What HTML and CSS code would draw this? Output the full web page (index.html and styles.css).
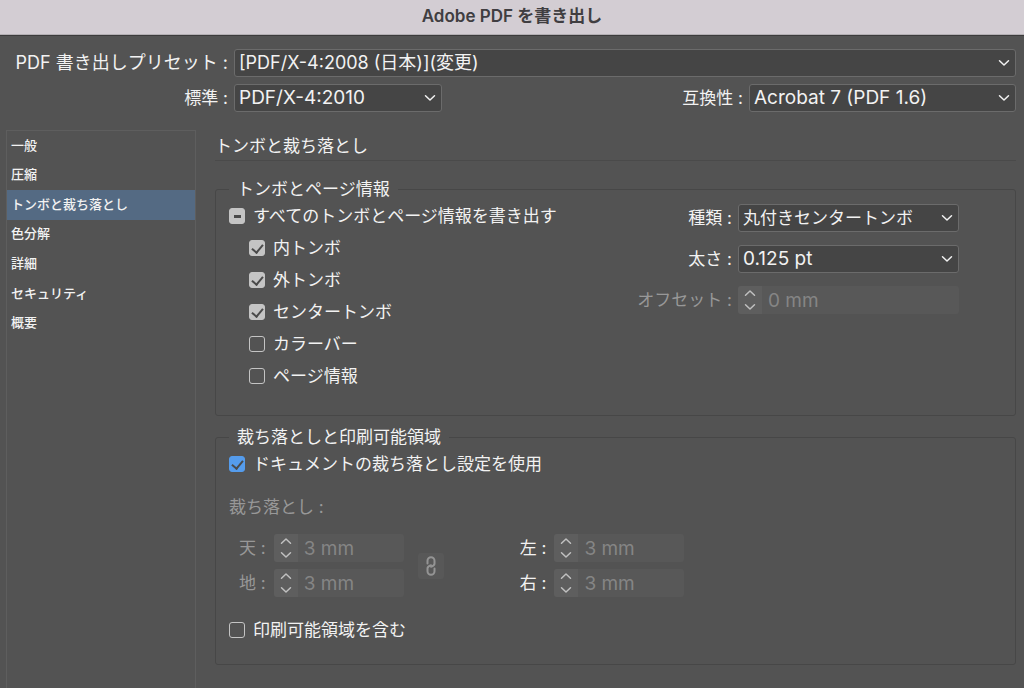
FILE: index.html
```html
<!DOCTYPE html>
<html lang="ja">
<head>
<meta charset="utf-8">
<title>Adobe PDF を書き出し</title>
<link rel="stylesheet" href="styles.css">
</head>
<body>
<svg class="sprite" aria-hidden="true">
  <symbol id="chevron" viewBox="0 0 12 8"><path d="M1.500 1.800 6 6 10.500 1.800"/></symbol>
  <symbol id="chevron-up" viewBox="0 0 12 8"><path d="M1.500 6.200 6 2 10.500 6.200"/></symbol>
</svg>
<div class="dialog">
  <header class="titlebar"><h1>Adobe PDF を書き出し</h1></header>

  <div class="presets">
    <label for="preset" class="mixed">PDF 書き出しプリセット :</label>
    <div class="select mixed"><select id="preset"><option>[PDF/X-4:2008 (日本)](変更)</option></select><svg><use href="#chevron"/></svg></div>
    <label for="standard">標準 :</label>
    <div class="preset-pair">
      <div class="select standard latin"><select id="standard"><option>PDF/X-4:2010</option></select><svg><use href="#chevron"/></svg></div>
      <div class="field">
        <label for="compat">互換性 :</label>
        <div class="select compat latin"><select id="compat"><option>Acrobat 7 (PDF 1.6)</option></select><svg><use href="#chevron"/></svg></div>
      </div>
    </div>
  </div>

  <div class="body">
    <nav class="sidebar">
      <div class="tabs">
        <button type="button">一般</button>
        <button type="button">圧縮</button>
        <button type="button" class="selected" aria-current="page">トンボと裁ち落とし</button>
        <button type="button">色分解</button>
        <button type="button">詳細</button>
        <button type="button">セキュリティ</button>
        <button type="button">概要</button>
      </div>
    </nav>

    <main class="panel">
      <h2>トンボと裁ち落とし</h2>

      <fieldset class="marks">
        <legend>トンボとページ情報</legend>
        <div class="columns">
          <div class="checks">
            <label class="check"><input type="checkbox" aria-checked="mixed"><span>すべてのトンボとページ情報を書き出す</span></label>
            <div class="checks nested">
              <label class="check"><input type="checkbox" checked><span>内トンボ</span></label>
              <label class="check"><input type="checkbox" checked><span>外トンボ</span></label>
              <label class="check"><input type="checkbox" checked><span>センタートンボ</span></label>
              <label class="check"><input type="checkbox"><span>カラーバー</span></label>
              <label class="check"><input type="checkbox"><span>ページ情報</span></label>
            </div>
          </div>
          <div class="options">
            <label for="type">種類 :</label>
            <div class="select"><select id="type"><option>丸付きセンタートンボ</option></select><svg><use href="#chevron"/></svg></div>
            <label for="weight">太さ :</label>
            <div class="select latin"><select id="weight"><option>0.125 pt</option></select><svg><use href="#chevron"/></svg></div>
            <label for="offset" class="dim">オフセット :</label>
            <div class="spin latin">
              <div class="stepper"><button type="button" disabled aria-label="増やす"><svg><use href="#chevron-up"/></svg></button><button type="button" disabled aria-label="減らす"><svg><use href="#chevron"/></svg></button></div>
              <input id="offset" type="text" value="0 mm" disabled>
            </div>
          </div>
        </div>
      </fieldset>

      <fieldset class="bleed">
        <legend>裁ち落としと印刷可能領域</legend>
        <label class="check accent"><input type="checkbox" checked><span>ドキュメントの裁ち落とし設定を使用</span></label>
        <p class="dim">裁ち落とし :</p>
        <div class="margins">
          <div class="pair">
            <label for="top" class="dim">天 :</label>
            <div class="spin latin">
              <div class="stepper"><button type="button" disabled aria-label="増やす"><svg><use href="#chevron-up"/></svg></button><button type="button" disabled aria-label="減らす"><svg><use href="#chevron"/></svg></button></div>
              <input id="top" type="text" value="3 mm" disabled>
            </div>
            <label for="bottom" class="dim">地 :</label>
            <div class="spin latin">
              <div class="stepper"><button type="button" disabled aria-label="増やす"><svg><use href="#chevron-up"/></svg></button><button type="button" disabled aria-label="減らす"><svg><use href="#chevron"/></svg></button></div>
              <input id="bottom" type="text" value="3 mm" disabled>
            </div>
          </div>
          <button type="button" class="link" disabled aria-label="すべての設定を同一にする">
            <svg viewBox="0 0 12 20"><path d="M2.500 7.500V4.800a3.500 3.500 0 0 1 7 0V7.500Q9.500 9.800 6 10.800"/><path d="M9.500 12.500v2.700a3.500 3.500 0 0 1-7 0V12.500Q2.500 10.200 6 9.200"/></svg>
          </button>
          <div class="pair">
            <label for="left">左 :</label>
            <div class="spin latin">
              <div class="stepper"><button type="button" disabled aria-label="増やす"><svg><use href="#chevron-up"/></svg></button><button type="button" disabled aria-label="減らす"><svg><use href="#chevron"/></svg></button></div>
              <input id="left" type="text" value="3 mm" disabled>
            </div>
            <label for="right">右 :</label>
            <div class="spin latin">
              <div class="stepper"><button type="button" disabled aria-label="増やす"><svg><use href="#chevron-up"/></svg></button><button type="button" disabled aria-label="減らす"><svg><use href="#chevron"/></svg></button></div>
              <input id="right" type="text" value="3 mm" disabled>
            </div>
          </div>
        </div>
        <label class="check"><input type="checkbox"><span>印刷可能領域を含む</span></label>
      </fieldset>
    </main>
  </div>
</div>
</body>
</html>
```
FILE: styles.css
```css
* { box-sizing: border-box; }

body {
  margin: 0;
  background: #535353;
  color: #f2f2f2;
  font: 17px/24px Inter, "Noto Sans CJK JP", sans-serif;
}

button, input, select { font: inherit; color: inherit; margin: 0; }
h1, h2, p { margin: 0; }

.sprite { position: absolute; width: 0; height: 0; }
svg { fill: none; stroke: currentColor; stroke-width: 1.5; stroke-linecap: round; stroke-linejoin: round; }

.mixed { font-size: 18px; }
.latin { font-size: 19px; }

.dialog { display: flex; flex-direction: column; min-height: 100vh; }

.titlebar {
  padding: 4px 0 7px;
  background: #d3cdd3;
  border-bottom: 1px solid #3c3b3c;
  box-shadow: inset 0 -1px #b3afb3;
  color: #403e41;
  text-align: center;
}
.titlebar h1 { font-size: 17px; line-height: 24px; font-weight: 600; }

/* Preset rows */
.presets {
  display: grid;
  grid-template-columns: 220px 1fr;
  gap: 7px 6px;
  align-items: center;
  padding: 13px 8px 18px;
}
.presets label, .options label { text-align: right; white-space: nowrap; }
.preset-pair { display: flex; justify-content: space-between; }
.field { display: flex; align-items: center; gap: 6px; }
.standard { width: 208px; }
.compat { width: 267px; }

.select { position: relative; }
.select select {
  display: block;
  width: 100%;
  height: 28px;
  padding: 0 24px 0 4px;
  appearance: none;
  background: #454545;
  border: 1px solid #6b6b6b;
  border-radius: 3px;
}
.select svg {
  position: absolute;
  right: 6px;
  top: 10px;
  width: 12px;
  height: 8px;
  pointer-events: none;
}

/* Category list */
.body { flex: 1; display: flex; gap: 19px; padding: 0 8px 0 6px; }
.sidebar { width: 190px; flex: none; border: 1px solid #5e5e5e; border-bottom: 0; }
.tabs { display: grid; grid-auto-rows: 1fr; min-height: 207px; }
.tabs button {
  padding: 0 4px 2px;
  border: 0;
  background: none;
  font-size: 13px;
  font-weight: 500;
  line-height: 24px;
  text-align: left;
}
.tabs .selected { background: #546a83; }

/* Settings panel */
.panel { flex: 1; min-width: 0; padding-top: 4px; }
.panel h2 {
  margin-bottom: 16px;
  padding-bottom: 2px;
  border-bottom: 1px solid #4a4a4a;
  font-size: 17px;
  font-weight: 400;
}
fieldset { margin: 0; border: 1px solid #474747; border-radius: 3px; min-width: 0; }
legend { padding: 0 8px; }
.marks { padding: 3px 56px 27px 13px; }
.bleed { margin-top: 9px; padding: 3px 13px 22px; }

.columns { display: flex; justify-content: space-between; align-items: flex-start; }
.checks { display: flex; flex-direction: column; gap: 8px; }
.nested { padding-left: 20px; }

.check { display: flex; align-items: center; gap: 8px; }
.check input {
  display: grid;
  place-items: center;
  width: 16px;
  height: 16px;
  appearance: none;
  border: 1px solid #c4c4c4;
  border-radius: 3px;
}
.check input:checked, .check [aria-checked="mixed"] { background: #c4c4c4; }
.check input:checked::before {
  content: "";
  width: 5px;
  height: 9px;
  margin-bottom: 2px;
  border: solid #4a4a4a;
  border-width: 0 2px 2px 0;
  transform: rotate(40deg);
}
.check [aria-checked="mixed"]::before { content: ""; width: 7px; height: 3px; background: #4a4a4a; }
.accent input:checked { background: #559cec; border-color: #559cec; }

.options { display: grid; grid-template-columns: auto 221px; gap: 13px 6px; align-items: center; }

.dim { color: #989898; }

.spin { display: flex; height: 28px; background: #585858; border-radius: 3px; overflow: hidden; }
.stepper { display: flex; flex-direction: column; flex: none; width: 24px; background: #5e5e5e; }
.stepper button { flex: 1; display: grid; place-items: center; padding: 0; border: 0; background: none; color: #c0c0c0; }
.stepper svg { width: 12px; height: 8px; }
.spin input { flex: 1; min-width: 0; padding: 2px 6px 0; border: 0; background: none; color: #858585; }

.bleed p { margin: 19px 0 15px; }
.margins { display: flex; align-items: center; margin-bottom: 21px; padding-left: 10px; }
.pair { display: grid; grid-template-columns: auto 130px; gap: 7px 8px; align-items: center; }
.link {
  display: grid;
  place-items: center;
  width: 26px;
  height: 26px;
  margin: 0 76px 0 14px;
  padding: 0;
  border: 0;
  border-radius: 3px;
  background: #585858;
  color: #949494;
}
.link svg { width: 12px; height: 20px; stroke-width: 2; }
```
